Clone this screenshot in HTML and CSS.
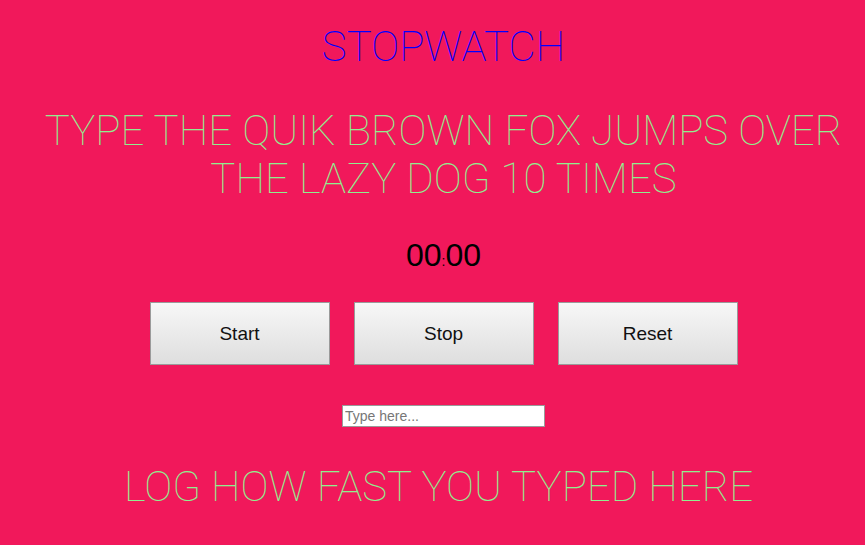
FILE: index.html
```html
<!DOCTYPE html>
<html>
<head>
<meta charset="utf-8">
<link rel="stylesheet" href="styles.css">
</head>
<body>
<main class="page">
  <h1 class="title">STOPWATCH</h1>
  <h2 class="task">TYPE THE QUIK BROWN FOX JUMPS OVER THE LAZY DOG 10 TIMES</h2>
  <div class="timer"><span>00</span><span class="colon">:</span><span>00</span></div>
  <div class="buttons">
    <button class="btn">Start</button>
    <button class="btn">Stop</button>
    <button class="btn">Reset</button>
  </div>
  <div class="entry"><input class="field" type="text" placeholder="Type here..."></div>
  <h2 class="log">LOG HOW FAST YOU TYPED HERE</h2>
</main>
</body>
</html>
```

FILE: styles.css
```css
html, body {
  margin: 0;
  padding: 0;
  background: #f1185b;
}
.page {
  padding-left: 22px;
  text-align: center;
  font-family: Roboto, "Liberation Sans", sans-serif;
}
.title {
  margin: 0;
  padding-top: 22px;
  font-size: 42px;
  font-weight: 100;
  color: #0000ff;
  line-height: 49px;
}
.task, .log {
  font-size: 42px;
  font-weight: 100;
  color: #90ee90;
  line-height: 48px;
  margin: 0;
}
.task {
  margin: 36px 0 0;
}
.timer {
  margin-top: 34px;
  font-family: "Liberation Sans", Arial, sans-serif;
  font-size: 32px;
  color: #000;
  line-height: 36px;
}
.colon {
  font-size: 14px;
}
.buttons {
  display: flex;
  justify-content: center;
  gap: 24px;
  margin-top: 23px;
}
.btn {
  width: 180px;
  height: 63px;
  border: 1px solid #9a9a9a;
  background: linear-gradient(#f7f7f7, #dedede);
  font-family: "Liberation Sans", Arial, sans-serif;
  font-size: 19px;
  color: #111;
  padding: 0;
}
.entry {
  margin-top: 40px;
}
.field {
  width: 203px;
  height: 22px;
  box-sizing: border-box;
  border: 1px solid #9a9a9a;
  padding: 1px 2px;
  font-family: "Liberation Sans", Arial, sans-serif;
  font-size: 14px;
  background: #fff;
}
.field::placeholder {
  color: #777;
}
.log {
  margin-top: 36px;
  padding-right: 10px;
}
```
